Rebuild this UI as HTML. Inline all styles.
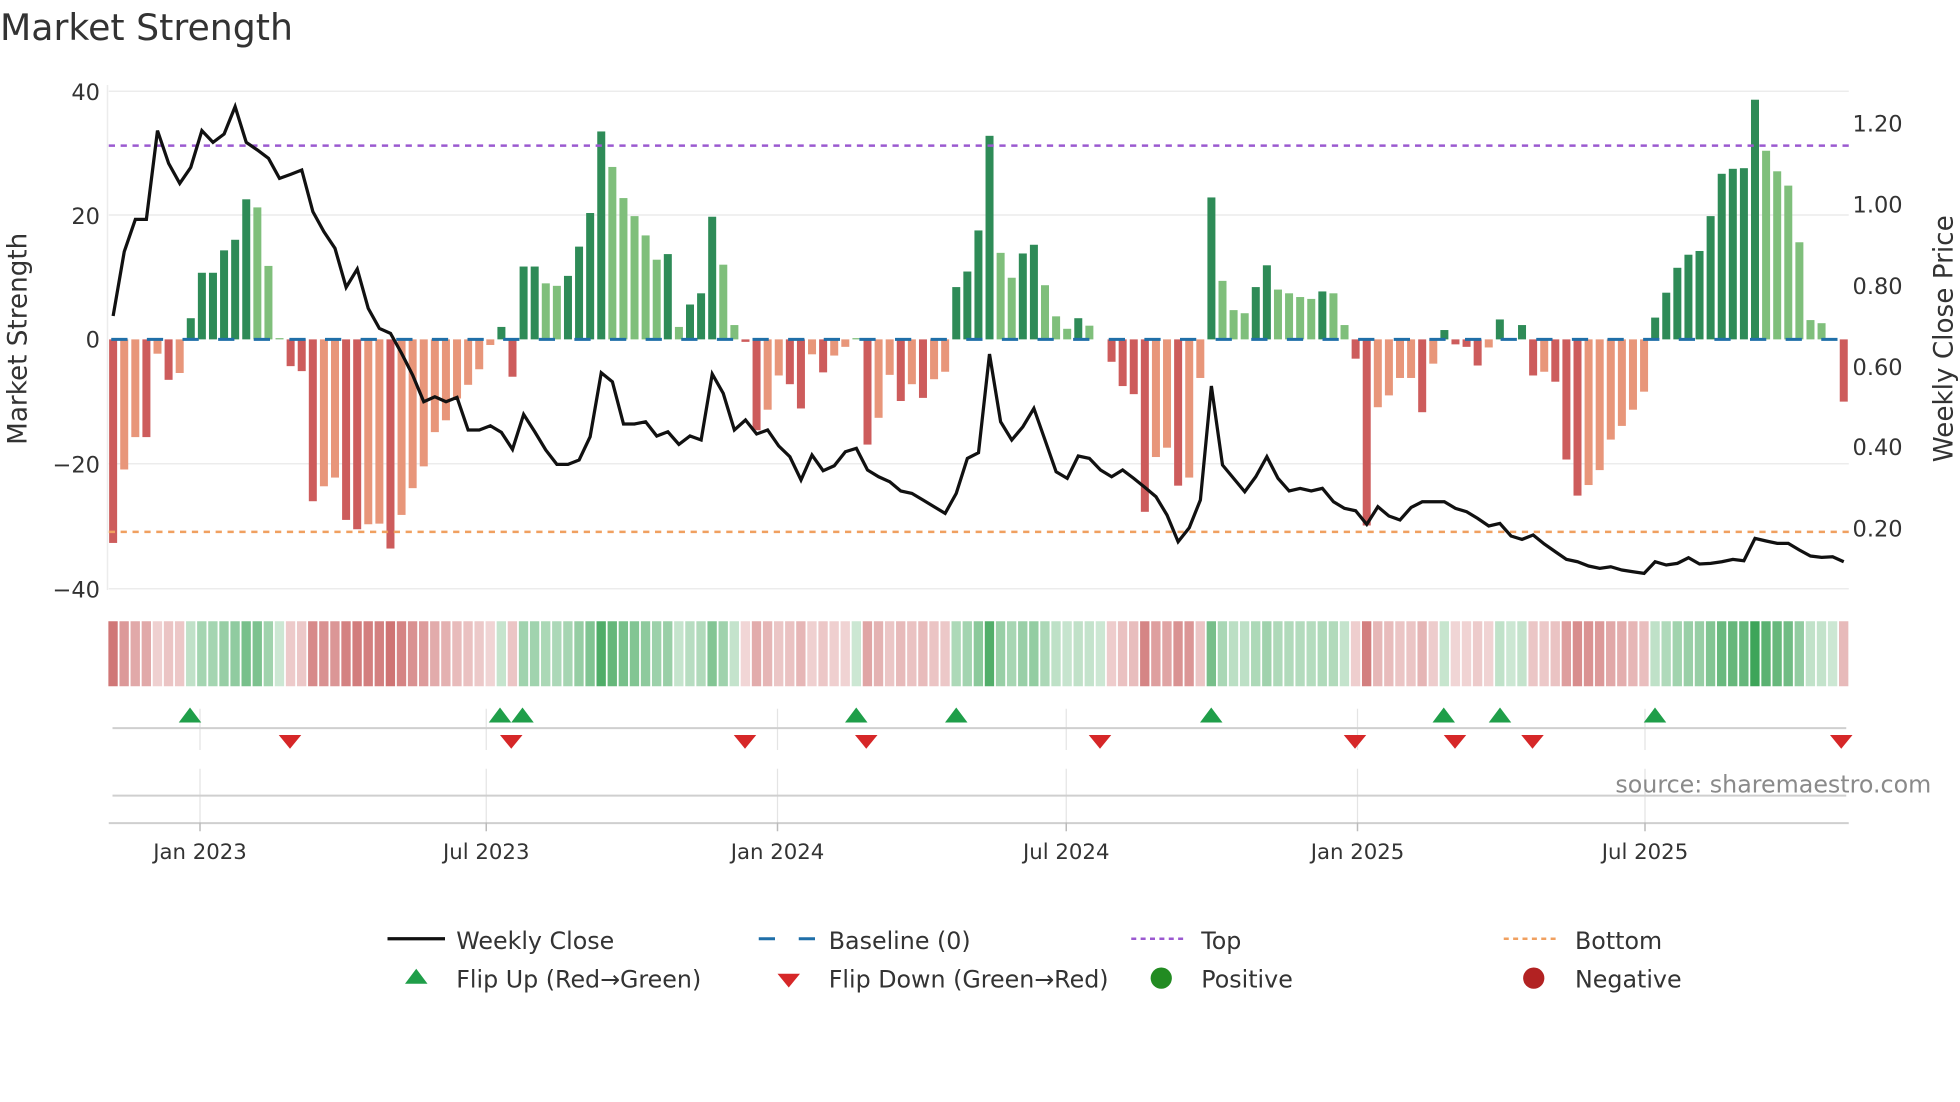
<!DOCTYPE html>
<html><head><meta charset="utf-8"><style>
html,body{margin:0;padding:0;background:#fff;width:1960px;height:1102px;overflow:hidden}
svg{display:block}
text{font-family:"DejaVu Sans","Liberation Sans",sans-serif;fill:#333}
</style></head><body>
<svg id="s" width="1960" height="1102" viewBox="0 0 1568 881.6" xmlns="http://www.w3.org/2000/svg">
<text x="0" y="32" font-size="29">Market Strength</text>
<g stroke="#ececec" stroke-width="1.2">
<line x1="87" y1="73" x2="1479" y2="73"/><line x1="87" y1="172" x2="1479" y2="172"/>
<line x1="87" y1="371" x2="1479" y2="371"/><line x1="87" y1="471" x2="1479" y2="471"/>
<line x1="86" y1="68" x2="86" y2="472"/>
</g>
<g font-size="18" text-anchor="end">
<text x="80" y="80">40</text><text x="80" y="179">20</text><text x="80" y="278">0</text>
<text x="80" y="378">−20</text><text x="80" y="478">−40</text>
</g>
<g font-size="18">
<text x="1482" y="105">1.20</text><text x="1482" y="170">1.00</text><text x="1482" y="235">0.80</text>
<text x="1482" y="300">0.60</text><text x="1482" y="364">0.40</text><text x="1482" y="429">0.20</text>
</g>
<text font-size="21" transform="translate(21,271) rotate(-90)" text-anchor="middle">Market Strength</text>
<text font-size="21" transform="translate(1562,271) rotate(-90)" text-anchor="middle">Weekly Close Price</text>
<g id="bars"></g>
<line x1="87" y1="271.5" x2="1479" y2="271.5" stroke="#1f6fa8" stroke-width="2.4" stroke-dasharray="13,15.5" stroke-dashoffset="-2"/>
<line x1="87" y1="116.5" x2="1479" y2="116.5" stroke="#9b59d0" stroke-width="2" stroke-dasharray="5,4.5"/>
<line x1="87" y1="425.5" x2="1479" y2="425.5" stroke="#f0a060" stroke-width="2" stroke-dasharray="5,4.5"/>
<polyline id="pl" fill="none" stroke="#111" stroke-width="2.6" stroke-linejoin="miter"/>
<g id="strip"></g>
<g stroke="#e4e4e4" stroke-width="1">
<line x1="160" y1="567" x2="160" y2="600"/><line x1="389" y1="567" x2="389" y2="600"/><line x1="622" y1="567" x2="622" y2="600"/><line x1="853" y1="567" x2="853" y2="600"/><line x1="1086" y1="567" x2="1086" y2="600"/><line x1="1316" y1="567" x2="1316" y2="600"/>
<line x1="160" y1="615" x2="160" y2="658"/><line x1="389" y1="615" x2="389" y2="658"/><line x1="622" y1="615" x2="622" y2="658"/><line x1="853" y1="615" x2="853" y2="658"/><line x1="1086" y1="615" x2="1086" y2="658"/><line x1="1316" y1="615" x2="1316" y2="658"/>
</g>
<line x1="90" y1="582.5" x2="1477" y2="582.5" stroke="#cfcfcf" stroke-width="1.6"/>
<line x1="90" y1="636.5" x2="1477" y2="636.5" stroke="#cfcfcf" stroke-width="1.6"/>
<line x1="87" y1="658.5" x2="1479" y2="658.5" stroke="#cfcfcf" stroke-width="1.6"/>
<g stroke="#bbb" stroke-width="1.2">
<line x1="160" y1="658" x2="160" y2="665"/><line x1="389" y1="658" x2="389" y2="665"/><line x1="622" y1="658" x2="622" y2="665"/><line x1="853" y1="658" x2="853" y2="665"/><line x1="1086" y1="658" x2="1086" y2="665"/><line x1="1316" y1="658" x2="1316" y2="665"/>
</g>
<g id="mk"></g>
<g font-size="17" text-anchor="middle">
<text x="160" y="687">Jan 2023</text><text x="389" y="687">Jul 2023</text><text x="622" y="687">Jan 2024</text>
<text x="853" y="687">Jul 2024</text><text x="1086" y="687">Jan 2025</text><text x="1316" y="687">Jul 2025</text>
</g>
<text x="1545" y="634" font-size="19" text-anchor="end" style="fill:#8a8a8a">source: sharemaestro.com</text>
<g font-size="19">
<line x1="310" y1="751" x2="356" y2="751" stroke="#111" stroke-width="2.6"/>
<text x="365" y="759">Weekly Close</text>
<line x1="607" y1="751" x2="652" y2="751" stroke="#1f6fa8" stroke-width="2.4" stroke-dasharray="13,19"/>
<text x="663" y="759">Baseline (0)</text>
<line x1="905" y1="751" x2="948" y2="751" stroke="#9b59d0" stroke-width="2" stroke-dasharray="4,3.5"/>
<text x="961" y="759">Top</text>
<line x1="1203" y1="751" x2="1248" y2="751" stroke="#f0a060" stroke-width="2" stroke-dasharray="4,3.5"/>
<text x="1260" y="759">Bottom</text>
<polygon points="324,787 342,787 333,775" fill="#1f9e49"/>
<text x="365" y="790">Flip Up (Red→Green)</text>
<polygon points="622,779 640,779 631,790" fill="#d62728"/>
<text x="663" y="790">Flip Down (Green→Red)</text>
<circle cx="929" cy="782.5" r="8.5" fill="#228b22"/>
<text x="961" y="790">Positive</text>
<circle cx="1227" cy="782.5" r="8.5" fill="#b22222"/>
<text x="1260" y="790">Negative</text>
</g>
</svg>
<script>
var V=[-32.7,-20.9,-15.7,-15.7,-2.3,-6.5,-5.4,3.4,10.7,10.7,14.3,16,22.5,21.2,11.8,0.2,-4.3,-5.1,-26,-23.6,-22.2,-29,-30.5,-29.7,-29.6,-33.6,-28.2,-23.9,-20.4,-14.9,-13,-9.5,-7.3,-4.8,-0.9,2,-6,11.7,11.7,9,8.6,10.2,14.9,20.3,33.4,27.7,22.7,19.8,16.7,12.8,13.7,2,5.6,7.4,19.7,12,2.3,-0.4,-14.6,-11.3,-5.8,-7.2,-11.1,-2.4,-5.3,-2.6,-1.2,0.2,-16.9,-12.6,-5.7,-9.9,-7.2,-9.4,-6.4,-5.2,8.4,10.9,17.5,32.7,13.9,9.9,13.8,15.2,8.7,3.7,1.7,3.4,2.2,0,-3.6,-7.5,-8.8,-27.7,-18.9,-17.4,-23.5,-22.2,-6.2,22.8,9.4,4.7,4.2,8.4,11.9,8,7.4,6.8,6.5,7.7,7.4,2.3,-3.1,-29.9,-10.9,-9,-6.2,-6.2,-11.7,-3.9,1.5,-0.8,-1.2,-4.2,-1.3,3.2,0,2.3,-5.8,-5.2,-6.8,-19.3,-25.1,-23.4,-21,-16.1,-13.9,-11.3,-8.4,3.5,7.5,11.5,13.6,14.2,19.8,26.6,27.4,27.5,38.5,30.3,27,24.7,15.6,3.1,2.6,0.1,-10];
var D=[1,0,0,1,0,1,0,1,1,1, 1,1,1,0,0,0,1,1,1,0, 0,1,1,0,0,1,0,0,0,0, 0,0,0,0,0,1,1,1,1,0, 0,1,1,1,1,0,0,0,0,0, 1,0,1,1,1,0,0,1,1,0, 0,1,1,0,1,0,0,0,1,0, 0,1,0,1,0,0,1,1,1,1, 0,0,1,1,0,0,0,1,0,0, 1,1,1,1,0,0,1,0,0,1, 0,0,0,1,1,0,0,0,0,1, 0,0,1,1,0,0,0,0,1,0, 1,1,1,1,0,1,0,1,1,0, 1,1,1,0,0,0,0,0,0,1, 1,1,1,1,1,1,1,1,1,0, 0,0,0,0,0,0,1];
var Y=[252.8,201.3,175.5,175.5,104.5,130.7,146.7,133.9,104.5,113.9,107.2,85.3,113.9,120,126.7,142.7,139.5,136,169.3,185.3,198.7,229.9,215.2,246.7,262.7,266.7,282.7,300,321.4,317.4,321.4,317.9,344,344,340.6,345.9,359.5,331.5,345.4,360,371.5,371.5,368,349.4,298.2,305.4,339.2,339.2,337.4,348.8,345.4,355.5,348.8,352,299.2,314.7,344,336,347.2,344,356.8,365.4,384,364,376.6,372.6,361.4,358.7,376,381.4,385.4,392.8,394.7,400,405.4,410.7,394.7,366.7,362.2,283.2,337.4,352,341.4,326.7,352,377.4,382.7,364.8,366.7,376,381.4,376,382.7,389.9,397.4,412,433.4,422.2,400,308.8,372,382.7,393.4,381.4,365.4,382.7,392.8,390.7,392.8,390.7,401.4,406.7,408.6,419.5,405.4,412.8,416,405.9,401.4,401.4,401.4,406.7,409.4,414.7,420.8,418.7,428.8,431.5,428,435.2,441.4,447.5,449.4,452.8,454.7,453.4,456,457.4,458.7,449.4,452,450.7,446.2,451.2,450.7,449.4,447.5,448.6,430.7,432.8,434.7,434.7,440,444.8,445.9,445.4,449.4];
var NS="http://www.w3.org/2000/svg";
function el(t,a,p){var e=document.createElementNS(NS,t);for(var k in a)e.setAttribute(k,a[k]);p.appendChild(e);return e;}
var bars=document.getElementById("bars"),strip=document.getElementById("strip"),mk=document.getElementById("mk");
var sp=8.875,pts=[];
function mix(c,t){return "rgb("+c.map(function(x){return Math.round(255+(x-255)*t)}).join(",")+")";}
for(var i=0;i<V.length;i++){
 var cx=90.5+i*sp,v=V[i],h=Math.abs(v)*4.98,d=D[i]==1;
 var col=v>=0?(d?"#2e8b57":"#7fbf7b"):(d?"#cd5c5c":"#e8967a");
 if(h>0.3)el("rect",{x:cx-3.2,y:v>=0?271.5-h:271.5,width:6.4,height:h,fill:col},bars);
 var t=0.25+0.7*Math.min(Math.abs(v)/38,1);
 el("rect",{x:cx-4.4+0.6,y:497,width:sp-1.4,height:52,fill:v>=0?mix([52,160,80],t):mix([200,95,95],t)},strip);
 pts.push(cx.toFixed(1)+","+Y[i]);
}
document.getElementById("pl").setAttribute("points",pts.join(" "));
[152,400,418,685,765,969,1155,1200,1324].forEach(function(x){el("polygon",{points:(x-9)+",578 "+(x+9)+",578 "+x+",566",fill:"#1f9e49"},mk)});
[232,409,596,693,880,1084,1164,1226,1473].forEach(function(x){el("polygon",{points:(x-9)+",588 "+(x+9)+",588 "+x+",599",fill:"#d62728"},mk)});
</script>
</body></html>
